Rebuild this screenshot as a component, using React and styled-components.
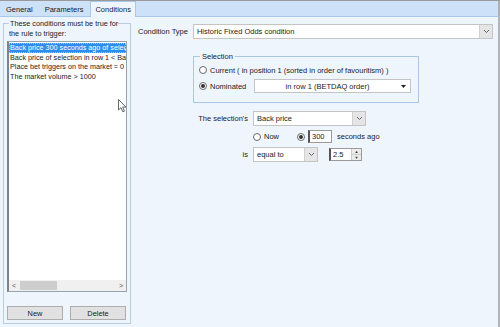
import React from "react";
import styled, { createGlobalStyle } from "styled-components";

const Global = createGlobalStyle`
  html, body { margin: 0; padding: 0; background: #ffffff; }
  body { font-family: "Liberation Sans", Arial, sans-serif; font-size: 7.5px; color: #1b1b1b; }
  * { box-sizing: border-box; }
`;

const Window = styled.div`
  width: 500px;
  height: 327px;
  display: flex;
  flex-direction: column;
  border-top: 1px solid #9a9a9a;
  overflow: hidden;
`;

const TabStrip = styled.div`
  height: 17px;
  background: #cde1f8;
  display: flex;
  align-items: flex-end;
  padding-left: 0;
  border-bottom: 1px solid #a9c9ec;
  border-right: 2px solid #b0b0b0;
`;

const Tab = styled.div`
  height: ${(p) => (p.$active ? "16px" : "14px")};
  padding: 0 ${(p) => (p.$active ? "4px" : "5px")};
  margin-bottom: ${(p) => (p.$active ? "-1px" : "0")};
  display: flex;
  align-items: center;
  font-size: 7.5px;
  color: #1a1a1a;
  background: ${(p) => (p.$active ? "#eef5fd" : "transparent")};
  border: ${(p) => (p.$active ? "1px solid #a9c9ec" : "1px solid transparent")};
  border-bottom: none;
  margin-left: ${(p) => (p.$active ? "1px" : "0")};
`;

const Body = styled.div`
  flex: 1;
  display: flex;
  background: #eef5fd;
  border-right: 2px solid #b4b4b4;
  border-bottom: 2px solid #bcd3ee;
  padding: 6px 0 3px 3px;
`;

const GroupBox = styled.div`
  width: 128px;
  border: 1px solid #b9cde2;
  display: flex;
  flex-direction: column;
  padding: 0 3px 3px 3px;
`;

const GroupTitle = styled.div`
  margin-top: -5px;
  padding: 0 3px 0 2px;
  width: 122px;
  line-height: 9.5px;
  font-size: 7.3px;
  span { background: #eef5fd; padding: 0 1px; }
`;

const ListBox = styled.div`
  position: relative;
  margin-top: 3px;
  height: 251px;
  background: #ffffff;
  border: 1px solid #9aa3ad;
  border-left: 2px solid #7c838c;
  display: flex;
  flex-direction: column;
  padding: 1px 0 0 0;
  overflow: hidden;
`;

const Items = styled.div`
  flex: 1;
`;

const Item = styled.div`
  height: 9.5px;
  line-height: 9.5px;
  white-space: nowrap;
  overflow: hidden;
  padding-left: 1px;
  font-size: 7.2px;
  color: ${(p) => (p.$sel ? "#ffffff" : "#1b1b1b")};
  background: ${(p) => (p.$sel ? "#2f8df0" : "transparent")};
  outline: ${(p) => (p.$sel ? "1px dotted #9cc9f8" : "none")};
  outline-offset: -1px;
`;

const HScroll = styled.div`
  height: 11px;
  background: #f0f0f0;
  display: flex;
  align-items: center;
  padding: 0 3px;
  font-size: 7px;
  color: #555;
`;

const Thumb = styled.div`
  width: 37px;
  height: 9px;
  background: #cdcdcd;
  margin-left: 4px;
`;

const Spacer = styled.div`
  flex: 1;
`;

const ButtonRow = styled.div`
  display: flex;
  gap: 7px;
  margin-top: 14px;
`;

const Button = styled.div`
  width: 56px;
  height: 14px;
  background: #e1e1e1;
  border: 1px solid #adadad;
  display: flex;
  align-items: center;
  justify-content: center;
  font-size: 7.4px;
  color: #222;
`;

const Cursor = styled.svg`
  position: absolute;
  left: 109px;
  top: 57px;
`;

const Right = styled.div`
  flex: 1;
  display: flex;
  flex-direction: column;
  padding: 0 5px 0 7px;
`;

const TypeRow = styled.div`
  display: flex;
  align-items: center;
  gap: 5px;
  margin-top: 1px;
`;

const Label = styled.span`
  font-size: 7.5px;
  white-space: nowrap;
`;

const Select = styled.div`
  width: ${(p) => p.$w};
  flex: ${(p) => (p.$grow ? 1 : "none")};
  height: ${(p) => p.$h || "15px"};
  background: #ffffff;
  border: 1px solid #c4c4c4;
  display: flex;
  align-items: center;
  font-size: 7.5px;
  padding-left: 3px;
`;

const SelectText = styled.span`
  flex: 1;
  white-space: nowrap;
  text-align: ${(p) => (p.$center ? "center" : "left")};
`;

const ArrowBox = styled.div`
  width: 13px;
  height: 100%;
  background: ${(p) => (p.$plain ? "transparent" : "#e5e5e5")};
  border-left: ${(p) => (p.$plain ? "none" : "1px solid #d0d0d0")};
  display: flex;
  align-items: center;
  justify-content: center;
`;

const SelectionBox = styled.div`
  margin: 17px 0 0 55px;
  width: 226px;
  height: 47px;
  border: 1px solid #a9c6e3;
  padding: 6px 7px 0 5px;
  display: flex;
  flex-direction: column;
  gap: 2px;
`;

const BoxTitle = styled.div`
  margin-top: -11px;
  margin-left: 1px;
  font-size: 7.5px;
  span { background: #eef5fd; padding: 0 2px; }
`;

const RadioRow = styled.div`
  display: flex;
  align-items: center;
  height: 14px;
  gap: 3px;
  font-size: 7.5px;
`;

const Radio = styled.span`
  width: 8px;
  height: 8px;
  border-radius: 50%;
  border: 1px solid #6a6a6a;
  background: #fff;
  display: inline-flex;
  align-items: center;
  justify-content: center;
  flex: none;
  &::after {
    content: "";
    width: 4px;
    height: 4px;
    border-radius: 50%;
    background: ${(p) => (p.$on ? "#333" : "transparent")};
  }
`;

const Grid = styled.div`
  display: grid;
  grid-template-columns: 110px auto;
  column-gap: 5px;
  row-gap: 4px;
  margin-top: 8px;
  align-items: center;
`;

const RLabel = styled.span`
  text-align: right;
  font-size: 7.5px;
`;

const Inline = styled.div`
  display: flex;
  align-items: center;
  gap: ${(p) => p.$gap || "3px"};
`;

const TextBox = styled.div`
  width: ${(p) => p.$w};
  height: 13px;
  background: #fff;
  border: 1px solid #9a9a9a;
  border-left: 2px solid #555;
  display: flex;
  align-items: center;
  padding-left: 2px;
  font-size: 7.5px;
`;

const Spinner = styled.div`
  width: 10px;
  height: 100%;
  margin-left: auto;
  display: flex;
  flex-direction: column;
  border-left: 1px solid #ccc;
`;

const SpinHalf = styled.div`
  flex: 1;
  background: #ececec;
  border-bottom: ${(p) => (p.$top ? "1px solid #ccc" : "none")};
  display: flex;
  align-items: center;
  justify-content: center;
  font-size: 4px;
  line-height: 1;
  color: #333;
`;

const Chevron = () => (
  <svg width="7" height="5" viewBox="0 0 7 5">
    <path d="M1 1 L3.5 3.5 L6 1" fill="none" stroke="#666" strokeWidth="1" />
  </svg>
);

const Tri = () => (
  <svg width="5" height="3" viewBox="0 0 5 3">
    <path d="M0 0 H5 L2.5 3 Z" fill="#222" />
  </svg>
);

export default function App() {
  return (
    <>
      <Global />
      <Window>
        <TabStrip>
          <Tab>General</Tab>
          <Tab>Parameters</Tab>
          <Tab $active>Conditions</Tab>
        </TabStrip>
        <Body>
          <GroupBox>
            <GroupTitle>
              <span>These conditions must be true for the rule to trigger:</span>
            </GroupTitle>
            <ListBox>
              <Items>
                <Item $sel>Back price 300 seconds ago of selection in row 1</Item>
                <Item>Back price of selection in row 1 &lt; Back price</Item>
                <Item>Place bet triggers on the market = 0</Item>
                <Item>The market volume &gt; 1000</Item>
              </Items>
              <HScroll>
                <span>&lt;</span>
                <Thumb />
                <Spacer />
                <span>&gt;</span>
              </HScroll>
              <Cursor width="9" height="14" viewBox="0 0 9 14">
                <path d="M0.5 0.5 V11 L3 8.6 L4.8 12.8 L6.4 12.1 L4.7 8.1 H8 Z" fill="#fff" stroke="#555" strokeWidth="0.9" />
              </Cursor>
            </ListBox>
            <ButtonRow>
              <Button>New</Button>
              <Button>Delete</Button>
            </ButtonRow>
          </GroupBox>
          <Right>
            <TypeRow>
              <Label>Condition Type</Label>
              <Select $grow>
                <SelectText>Historic Fixed Odds condition</SelectText>
                <ArrowBox><Chevron /></ArrowBox>
              </Select>
            </TypeRow>
            <SelectionBox>
              <BoxTitle><span>Selection</span></BoxTitle>
              <RadioRow>
                <Radio />
                <span>Current ( in position 1 (sorted in order of favouritism) )</span>
              </RadioRow>
              <RadioRow>
                <Radio $on />
                <span style={{ width: "49px" }}>Nominated</span>
                <Select $w="157px" $h="14px">
                  <SelectText $center>in row 1 (BETDAQ order)</SelectText>
                  <ArrowBox $plain><Tri /></ArrowBox>
                </Select>
              </RadioRow>
            </SelectionBox>
            <Grid>
              <RLabel>The selection's</RLabel>
              <Select $w="113px">
                <SelectText>Back price</SelectText>
                <ArrowBox><Chevron /></ArrowBox>
              </Select>
              <span />
              <Inline $gap="3px">
                <Radio />
                <Label style={{ marginRight: "15px" }}>Now</Label>
                <Radio $on />
                <TextBox $w="24px">300</TextBox>
                <Label style={{ marginLeft: "2px" }}>seconds ago</Label>
              </Inline>
              <RLabel>is</RLabel>
              <Inline $gap="11px">
                <Select $w="65px">
                  <SelectText>equal to</SelectText>
                  <ArrowBox><Chevron /></ArrowBox>
                </Select>
                <TextBox $w="33px">
                  2.5
                  <Spinner>
                    <SpinHalf $top>▲</SpinHalf>
                    <SpinHalf>▼</SpinHalf>
                  </Spinner>
                </TextBox>
              </Inline>
            </Grid>
          </Right>
        </Body>
      </Window>
    </>
  );
}
